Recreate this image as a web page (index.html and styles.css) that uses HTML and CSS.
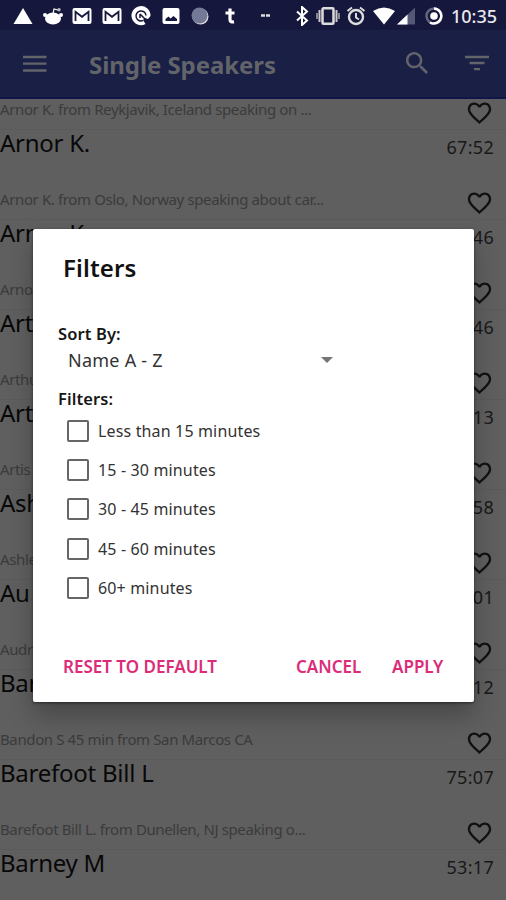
FILE: index.html
```html
<!DOCTYPE html>
<html lang="en">
<head>
<meta charset="utf-8">
<title>Single Speakers</title>
<link rel="stylesheet" href="styles.css">
</head>
<body>
<svg class="defs" width="0" height="0" aria-hidden="true">
  <symbol id="heart" viewBox="0 0 24 24"><path d="M16.5 3c-1.74 0-3.41.81-4.5 2.09C10.91 3.81 9.24 3 7.5 3 4.42 3 2 5.42 2 8.5c0 3.78 3.4 6.86 8.55 11.54L12 21.35l1.45-1.32C18.6 15.36 22 12.28 22 8.5 22 5.42 19.58 3 16.5 3zm-4.4 15.55l-.1.1-.1-.1C7.14 14.24 4 11.39 4 8.5 4 6.5 5.5 5 7.5 5c1.54 0 3.04.99 3.57 2.36h1.87C13.46 5.99 14.96 5 16.5 5c2 0 3.5 1.5 3.5 3.5 0 2.89-3.14 5.74-7.9 10.05z"/></symbol>
  <symbol id="mail" viewBox="0 0 20 18"><rect x="0.5" y="1" width="19" height="16" rx="2" fill="#fff"/><path d="M3.5 14V4.8L10 9.8l6.500-5V14" fill="none" stroke="#15173c" stroke-width="1.8"/></symbol>
</svg>
<div class="screen">
  <header class="status">
    <div class="notifications">
      <svg width="20" height="18" viewBox="0 0 20 18"><path d="M10 1l9.500 16H.5z" fill="#fff"/></svg>
      <svg width="20" height="18" viewBox="0 0 20 18"><ellipse cx="10" cy="11.500" rx="8" ry="6" fill="#fff"/><circle cx="2" cy="8" r="2" fill="#fff"/><circle cx="18" cy="8" r="2" fill="#fff"/><path d="M10 7l1-5 4 1" fill="none" stroke="#fff" stroke-width="1.200"/><circle cx="16" cy="2.800" r="1.700" fill="#bbb"/></svg>
      <svg width="20" height="18"><use href="#mail"/></svg>
      <svg width="20" height="18"><use href="#mail"/></svg>
      <svg width="20" height="20" viewBox="0 0 20 20"><path d="M14.500 18A9.500 9.500 0 1 1 19.500 10L17 13l-3-1-2 2z" fill="#fff"/><path d="M12 14.500a5 5 0 1 1 3-5" fill="none" stroke="#15173c" stroke-width="1.500"/><path d="M9 8l5 5M9 8v4" stroke="#15173c" stroke-width="1.500"/></svg>
      <svg width="20" height="18" viewBox="0 0 20 18"><rect x="1.500" y="1" width="17" height="16" rx="2" fill="#fff"/><path d="M4.500 14v-2l3-2.500 2 2 3-2.500 3.500 3v2z" fill="#15173c"/></svg>
      <svg width="20" height="18" viewBox="0 0 20 18"><circle cx="10.500" cy="9.500" r="8" fill="#ddd"/><circle cx="9.500" cy="8.500" r="8" fill="#747997"/></svg>
      <svg width="20" height="18" viewBox="0 0 20 18"><path d="M10 1.500v11q0 3 4 2.300M5.500 6h9" fill="none" stroke="#fff" stroke-width="3.200"/></svg>
    </div>
    <svg class="dots" width="10" height="3" viewBox="0 0 10 3"><path d="M0 1.500h4M5 1.500h4" stroke="#ddd" stroke-width="2.500"/></svg>
    <div class="system">
      <svg class="bt" width="14" height="20" viewBox="0 0 14 20"><path d="M2 5.500l10 9-5 4.500V1l5 4.500-10 9" fill="none" stroke="#fff" stroke-width="2"/></svg>
      <svg class="vib" width="24" height="18" viewBox="0 0 24 18"><rect x="6.500" y="1.300" width="11" height="15.400" rx="1" fill="none" stroke="#ddd" stroke-width="2.500"/><path d="M3.500 3v12M20.500 3v12" stroke="#ccc" stroke-width="2"/><path d="M1 6v6M23 6v6" stroke="#aaa" stroke-width="1.500"/></svg>
      <svg class="alarm" width="20" height="20" viewBox="0 0 20 20"><circle cx="10" cy="11" r="7" fill="none" stroke="#ddd" stroke-width="2.400"/><path d="M10 7v4.500l3 2M1.500 5L6 1.500M18.500 5L14 1.500" fill="none" stroke="#ddd" stroke-width="2"/></svg>
      <svg class="wifi" width="22" height="18" viewBox="0 0 22 18"><path d="M0 4Q11-3 22 4L11 17.500z" fill="#fff"/></svg>
      <svg class="signal" width="18" height="18" viewBox="0 0 18 18"><path d="M0 17.500L18 .5v17z" fill="#555777"/><path d="M0 17.500L10.500 7.500v10z" fill="#fff"/></svg>
      <svg class="battery" width="18" height="18" viewBox="0 0 18 18"><circle cx="9" cy="9" r="7.500" fill="none" stroke="#64667f" stroke-width="2.500"/><path d="M9 1.500a7.500 7.500 0 1 1-4 14" fill="none" stroke="#fff" stroke-width="2.500"/><circle cx="9" cy="9" r="3.800" fill="#fff"/></svg>
      <span class="clock">10:35</span>
    </div>
  </header>
  <nav class="appbar">
    <svg class="menu" width="24" height="18" viewBox="0 0 24 18"><path d="M0 2h23.500M0 8.700h23.500M0 15.500h23.500" stroke="#62646a" stroke-width="2.300"/></svg>
    <h1>Single Speakers</h1>
    <svg class="search" width="22" height="22" viewBox="3 3 17.500 17.500"><path fill="#62646a" d="M15.500 14h-.79l-.28-.27C15.410 12.590 16 11.110 16 9.500 16 5.910 13.090 3 9.500 3S3 5.910 3 9.500 5.910 16 9.500 16c1.610 0 3.090-.59 4.230-1.570l.27.28v.79l5 4.990L20.490 19l-4.990-5zm-6 0C7.010 14 5 11.990 5 9.500S7.010 5 9.500 5 14 7.010 14 9.500 11.990 14 9.500 14z"/></svg>
    <svg class="sort" width="24" height="16" viewBox="0 0 24 16"><path d="M0 2h24M4.500 8h15M9 14.200h6" stroke="#62646a" stroke-width="2.300"/></svg>
  </nav>
  <main class="list">
    <section class="row first"><div class="bottom"><p>Arnor K. from Reykjavik, Iceland speaking on ...</p><svg class="heart"><use href="#heart"/></svg></div></section>
    <section class="row"><div class="top"><h2>Arnor K.</h2><time>67:52</time></div><div class="bottom"><p>Arnor K. from Oslo, Norway speaking about car...</p><svg class="heart"><use href="#heart"/></svg></div></section>
    <section class="row"><div class="top"><h2>Arnor K.</h2><time>46</time></div><div class="bottom"><p>Arno</p><svg class="heart"><use href="#heart"/></svg></div></section>
    <section class="row"><div class="top"><h2>Art</h2><time>46</time></div><div class="bottom"><p>Arthu</p><svg class="heart"><use href="#heart"/></svg></div></section>
    <section class="row"><div class="top"><h2>Art</h2><time>13</time></div><div class="bottom"><p>Artis</p><svg class="heart"><use href="#heart"/></svg></div></section>
    <section class="row"><div class="top"><h2>Ash</h2><time>58</time></div><div class="bottom"><p>Ashle</p><svg class="heart"><use href="#heart"/></svg></div></section>
    <section class="row"><div class="top"><h2>Au</h2><time>01</time></div><div class="bottom"><p>Audr</p><svg class="heart"><use href="#heart"/></svg></div></section>
    <section class="row"><div class="top"><h2>Ban</h2><time>12</time></div><div class="bottom"><p>Bandon S 45 min from San Marcos CA</p><svg class="heart"><use href="#heart"/></svg></div></section>
    <section class="row"><div class="top"><h2>Barefoot Bill L</h2><time>75:07</time></div><div class="bottom"><p>Barefoot Bill L. from Dunellen, NJ speaking o...</p><svg class="heart"><use href="#heart"/></svg></div></section>
    <section class="row"><div class="top"><h2>Barney M</h2><time>53:17</time></div></section>
  </main>
  <div class="dialog" role="dialog">
    <h2 class="dialog-title">Filters</h2>
    <h3>Sort By:</h3>
    <div class="select"><span>Name A - Z</span><i class="arrow"></i></div>
    <h3 class="filters-label">Filters:</h3>
    <div class="options">
      <label><i class="box"></i><span>Less than 15 minutes</span></label>
      <label><i class="box"></i><span>15 - 30 minutes</span></label>
      <label><i class="box"></i><span>30 - 45 minutes</span></label>
      <label><i class="box"></i><span>45 - 60 minutes</span></label>
      <label><i class="box"></i><span>60+ minutes</span></label>
    </div>
    <div class="actions"><button class="reset">RESET TO DEFAULT</button><button class="cancel">CANCEL</button><button class="apply">APPLY</button></div>
  </div>
</div>
</body>
</html>
```
FILE: styles.css
```css
* { box-sizing: border-box; margin: 0; padding: 0; }
body { font-family: "Noto Sans", "Open Sans", sans-serif; background: #5f5f5f; }
.defs { display: block; }
svg { display: block; flex: none; }
.screen { position: relative; width: 506px; height: 900px; overflow: hidden; white-space: nowrap; }
.status { height: 30px; background: #15173c; display: flex; align-items: center; padding: 1px 9px 0 13px; }
.notifications { display: flex; align-items: center; gap: 9.500px; }
.dots { margin-left: 21px; }
.system { display: flex; align-items: center; margin-left: auto; }
.vib { margin-left: 7px; }
.alarm { margin-left: 6px; }
.wifi { margin-left: 7px; }
.signal { margin-left: 2px; }
.battery { margin-left: 10px; }
.clock { width: 46px; margin-left: 8px; font-size: 18px; line-height: 24px; font-weight: 500; color: #e8e8ee; letter-spacing: 0; }
.appbar { height: 69px; background: #191f45; border-bottom: 2px solid #11154a; display: flex; align-items: center; padding: 0 17px 0 23px; }
.appbar h1 { margin: 2px 0 0 42px; font-size: 24px; line-height: 34px; font-weight: 700; color: #62646a; letter-spacing: -0.07px; }
.search { margin: 0 37px 1px auto; }
.sort { margin-bottom: 1px; }
.list { height: 801px; }
.row { height: 90px; border-top: 1px solid #5b5b5b; display: flex; flex-direction: column; justify-content: space-between; }
.row.first { height: 30px; border: 0; justify-content: flex-end; }
.top { height: 34px; display: flex; justify-content: space-between; padding-right: 12px; }
.top h2 { font-size: 24px; line-height: 26px; font-weight: 400; color: #080808; letter-spacing: -0.25px; }
.top time { font-size: 18px; line-height: 34px; color: #181818; letter-spacing: 0.3px; }
.bottom { height: 30px; display: flex; justify-content: space-between; align-items: flex-start; padding-right: 12px; }
.bottom p { font-size: 15px; line-height: 21px; color: #3b3b3b; letter-spacing: -0.38px; }
.heart { width: 29px; height: 28px; fill: #111; }
.dialog { position: absolute; left: 33px; top: 229px; width: 441px; height: 473px; background: #fff; border-radius: 2px; box-shadow: 0 14px 24px rgba(0,0,0,.25), 0 1px 3px rgba(0,0,0,.5); padding: 22px 30px 0 25px; }
.dialog-title { padding-left: 5px; font-size: 24px; line-height: 34px; font-weight: 600; color: #111; letter-spacing: 0.15px; }
.dialog h3 { margin-top: 38px; font-size: 16.5px; line-height: 22px; font-weight: 600; color: #161616; letter-spacing: 0.1px; }
.select { height: 32px; width: 275px; padding: 0 0 2px 10px; display: flex; justify-content: space-between; align-items: center; font-size: 18px; line-height: 30px; color: #333; letter-spacing: 0.25px; }
.arrow { border: 6px solid transparent; border-top-color: #757575; border-bottom: 0; }
.dialog .filters-label { margin-top: 11px; }
.options { margin-top: 1px; padding-left: 9px; }
.options label { height: 39.400px; display: flex; align-items: center; gap: 9px; font-size: 16px; color: #333; letter-spacing: 0.15px; }
.box { width: 22px; height: 22px; border: 2px solid #666; border-radius: 2px; }
.actions { display: flex; margin-top: 47px; padding-left: 5px; }
.actions button { border: 0; background: none; font: 600 17px/24px "Noto Sans", sans-serif; color: #dc2c78; text-align: left; white-space: nowrap; }
.reset { width: 233px; }
.cancel { width: 96px; }
```
